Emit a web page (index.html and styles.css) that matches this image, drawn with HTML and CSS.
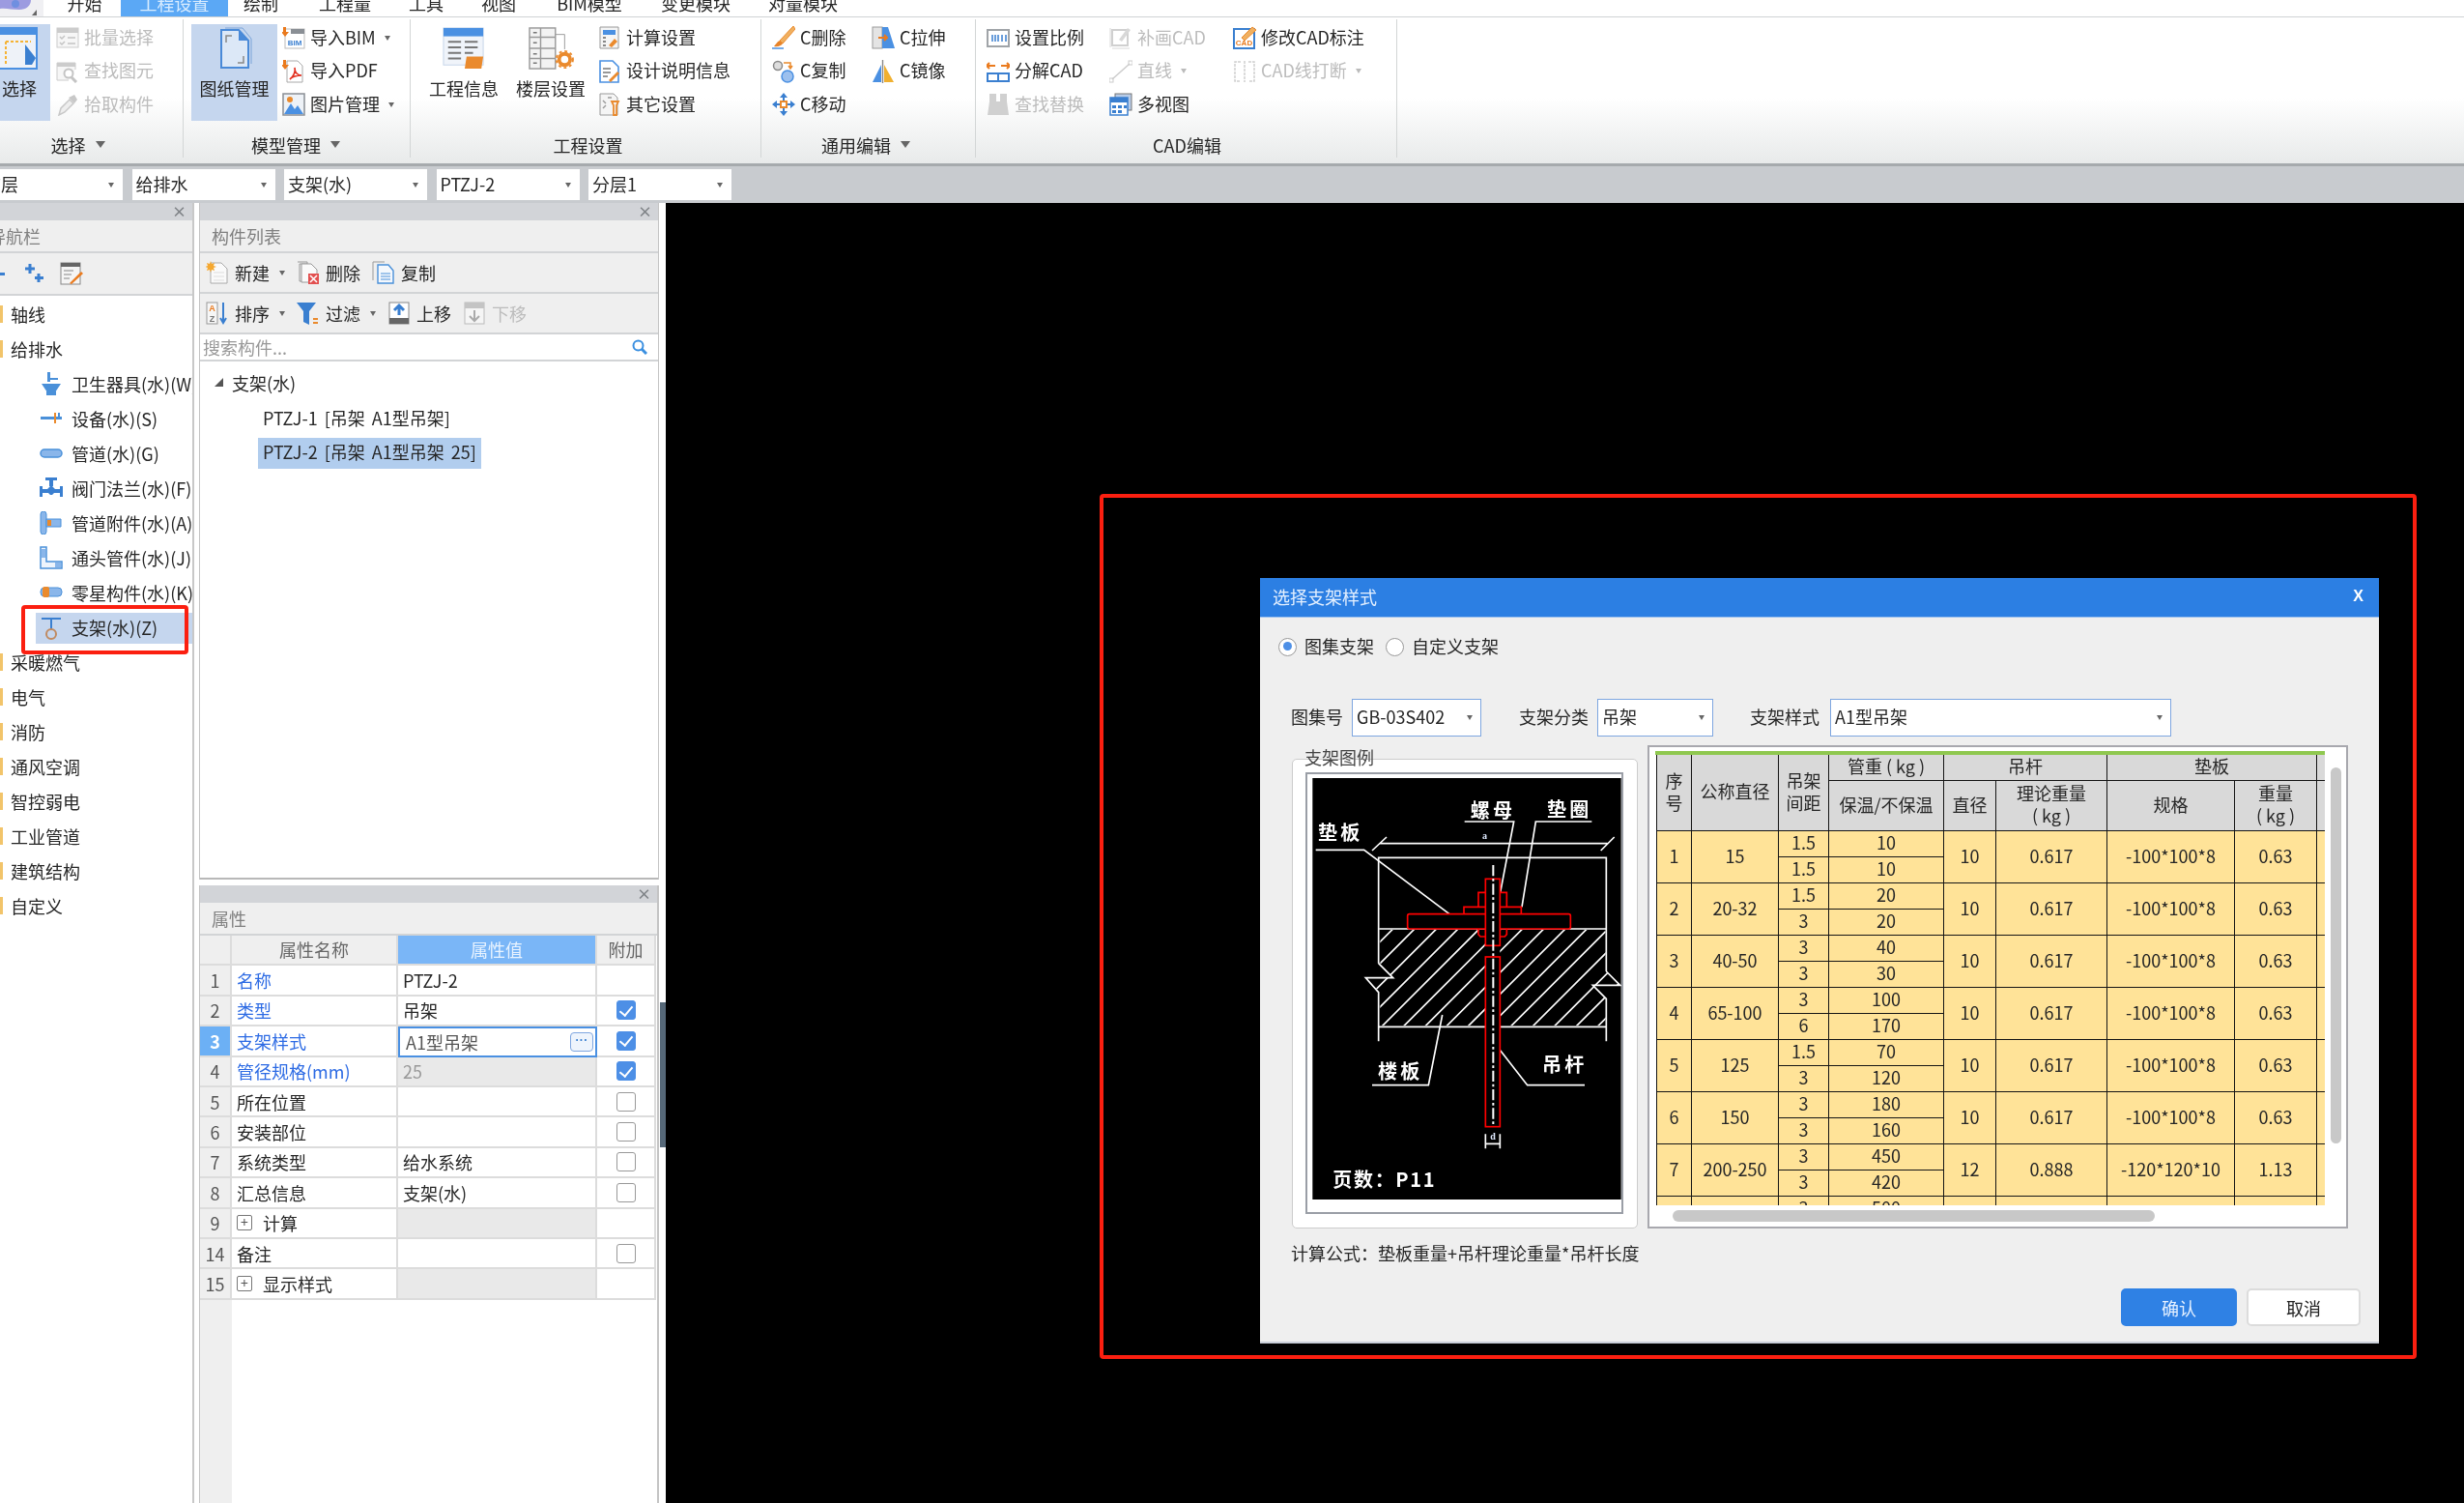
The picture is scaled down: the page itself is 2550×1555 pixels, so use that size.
FILE: index.html
```html
<!DOCTYPE html>
<html lang="zh-CN">
<head>
<meta charset="utf-8">
<title>选择支架样式</title>
<link rel="stylesheet" href="styles.css">
</head>
<body>
<svg class="defs" aria-hidden="true">
  <symbol id="i-batch" viewBox="0 0 24 24"><rect x="1" y="2" width="22" height="20" fill="#f6f6f6" stroke="#ccc"/><rect x="1" y="2" width="22" height="5" fill="#ccc"/><path d="M4 11l2 2 3-3M4 17l2 2 3-3M12 12h8M12 18h8" fill="none" stroke="#c4c4c4" stroke-width="1.5"/></symbol>
  <symbol id="i-find" viewBox="0 0 24 24"><path d="M20 10V3H1v18h12" fill="#f6f6f6" stroke="#ccc"/><rect x="1" y="3" width="19" height="4" fill="#ccc"/><circle cx="13" cy="14" r="4.5" fill="#fff" stroke="#c4c4c4" stroke-width="2"/><path d="M16 18l5 5" stroke="#c4c4c4" stroke-width="3"/></symbol>
  <symbol id="i-pick" viewBox="0 0 24 24"><path d="M3 23l2-7 9-9 4 4-9 9z" fill="#eee" stroke="#c8c8c8" stroke-width="1.5"/><path d="M13 5l6 6 3-4-3-5z" fill="#c8c8c8"/></symbol>
  <symbol id="i-bim" viewBox="0 0 24 24"><rect x="3" y="3" width="20" height="20" fill="#fff" stroke="#bbb"/><rect x="9" y="3" width="14" height="5" fill="#8a8f95"/><text x="13" y="20" class="svg-mini" fill="#3a7fd0">BIM</text><path d="M1 1h3v5h3l-4 5-4-5h2z" fill="#ea7a1d"/></symbol>
  <symbol id="i-pdf" viewBox="0 0 24 24"><path d="M5 1h11l5 5v17H5z" fill="#fff" stroke="#aaa"/><path d="M8 20c4-3 6-8 5-12 0 5 3 8 7 8-5 0-9 1-12 4z" fill="none" stroke="#e23020" stroke-width="1.6"/><path d="M1 0h3v5h3l-4 5-4-5h2z" fill="#ea7a1d"/></symbol>
  <symbol id="i-pic" viewBox="0 0 24 24"><rect x="1" y="1" width="22" height="22" fill="#eef2f7" stroke="#8a8f95" stroke-width="1.5"/><circle cx="8" cy="7" r="3" fill="#ea8a2d"/><path d="M2 22l7-11 4 6 3-4 6 9z" fill="#4a90e2"/></symbol>
  <symbol id="i-calc" viewBox="0 0 24 24"><path d="M2 1h19v22H2z" fill="#f5f5f5" stroke="#999"/><rect x="5" y="4" width="13" height="5" fill="#4a90e2"/><path d="M5 12h3M5 16h3M5 20h3" stroke="#888" stroke-width="2"/><path d="M11 20l6-7 3 3-6 6z" fill="#ea8a2d"/></symbol>
  <symbol id="i-design" viewBox="0 0 24 24"><path d="M2 1h13l6 6v16H2z" fill="#fff" stroke="#4a90e2" stroke-width="1.6"/><path d="M5 9h8M5 13h8M5 17h5" stroke="#777" stroke-width="1.5"/><path d="M11 21l9-9 2 2-9 9z" fill="#ea8a2d"/></symbol>
  <symbol id="i-other" viewBox="0 0 24 24"><path d="M2 1h14l4 4v18H2z" fill="#f5f5f5" stroke="#999"/><path d="M5 8l3 3M5 16l3-3M10 5h4" stroke="#999" stroke-width="1.4"/><path d="M14 9h7l-2 4v10h-3V13z" fill="none" stroke="#ea8a2d" stroke-width="1.8"/></symbol>
  <symbol id="i-select" viewBox="0 0 40 44"><rect x="-6" y="1" width="44" height="42" fill="#eef2f8" stroke="#4a90e2" stroke-width="2"/><rect x="-6" y="1" width="44" height="7" fill="#4a90e2"/><path d="M6 15h26M6 15v24" fill="none" stroke="#f5b335" stroke-width="2" stroke-dasharray="3 2"/><path d="M26 18l11 14-4 7h-7z" fill="#3a7fd0"/></symbol>
  <symbol id="i-paper" viewBox="0 0 36 44"><path d="M8 1h18l9 11v26" fill="none" stroke="#7aa3d8"/><path d="M4 3h18l10 11v28H4z" fill="#dce8f7" stroke="#4a8ad8" stroke-width="2"/><path d="M22 3v11h10z" fill="#4a8ad8"/><path d="M9 16V9h6M27 30v7h-6" fill="none" stroke="#888" stroke-width="1.5"/></symbol>
  <symbol id="i-info" viewBox="0 0 46 46"><rect x="1" y="1" width="43" height="40" fill="#f0f4fa" stroke="#c4d4e8"/><rect x="1" y="1" width="43" height="9" fill="#4a90e2"/><path d="M6 16h14M24 16h14M6 22h14M24 22h14M6 28h14M24 28h9M6 34h14" stroke="#777" stroke-width="2"/><path d="M26 32h18l-2 13H24z" fill="#ea8a2d"/></symbol>
  <symbol id="i-floor" viewBox="0 0 48 46"><rect x="1" y="1" width="28" height="44" fill="#f3f3f3" stroke="#999" stroke-width="1.5"/><path d="M1 11h28M1 23h28M1 34h28M13 1v44" stroke="#999" stroke-width="1.5"/><path d="M5 6h4M5 17h4M5 29h4M5 39h4" stroke="#777" stroke-width="1.5"/><path d="M29 8h10v16" fill="none" stroke="#999"/><circle cx="39" cy="35" r="6" fill="#fff" stroke="#ea8a2d" stroke-width="4"/><circle cx="39" cy="35" r="9" fill="none" stroke="#ea8a2d" stroke-width="2" stroke-dasharray="3 3"/></symbol>
  <symbol id="i-cdel" viewBox="0 0 24 24"><path d="M22 0L8 15l3 3L24 3z" fill="#f0b060" stroke="#ea8a2d"/><path d="M8 15c-3 1-4 4-6 6 4 1 8-1 9-3z" fill="#e8842a"/><path d="M0 23h12" stroke="#4a90e2" stroke-width="1.5"/></symbol>
  <symbol id="i-cstretch" viewBox="0 0 24 24"><rect x="1" y="1" width="10" height="22" fill="#e4e4e4" stroke="#999"/><path d="M11 23V1h6l7 22z" fill="#4a90e2"/><path d="M7 12h9M13 9l3 3-3 3" fill="none" stroke="#ea7a1d" stroke-width="2"/></symbol>
  <symbol id="i-ccopy" viewBox="0 0 24 24"><circle cx="6" cy="6" r="4.5" fill="#ddd" stroke="#888" stroke-width="1.5"/><circle cx="16" cy="17" r="6" fill="#9cc0ee" stroke="#4a90e2" stroke-width="1.5"/><path d="M12 3h7v5M17 6l2 3 2-3" fill="none" stroke="#ea8a2d" stroke-width="1.5"/></symbol>
  <symbol id="i-cmirror" viewBox="0 0 24 24"><path d="M10 5v18H1z" fill="#4a90e2"/><path d="M13 5v18h10z" fill="#f0b030"/><path d="M11.5 0v24" stroke="#888" stroke-width="1.4"/></symbol>
  <symbol id="i-cmove" viewBox="0 0 24 24"><path d="M12 0l4 5H8zM12 24l-4-5h8zM0 12l5-4v8zM24 12l-5 4V8z" fill="#3a7fd0"/><path d="M12 5v3M12 16v3M5 12h3M16 12h3" stroke="#3a7fd0" stroke-width="2"/><rect x="9" y="9" width="6" height="6" fill="#fff" stroke="#ea8a2d" stroke-width="2"/></symbol>
  <symbol id="i-scale" viewBox="0 0 24 24"><rect x="1" y="4" width="22" height="17" fill="#fff" stroke="#a0a4a8" stroke-width="2"/><path d="M6 9v7M12 9v7M9 9v7M16 9v7M20 9v7" stroke="#3a7fd0" stroke-width="1.5"/></symbol>
  <symbol id="i-explode" viewBox="0 0 24 24"><path d="M1 6h8M3 3L0 6l3 3M23 6h-8M21 3l3 3-3 3" fill="none" stroke="#ea7a1d" stroke-width="2"/><rect x="1" y="14" width="22" height="8" fill="#fff" stroke="#3a7fd0" stroke-width="2"/><path d="M12 14v8" stroke="#3a7fd0" stroke-width="2"/></symbol>
  <symbol id="i-replace" viewBox="0 0 24 24"><path d="M3 1h7v8h4V1h7v8l2 14H1L3 9z" fill="#d0d0d0"/></symbol>
  <symbol id="i-patch" viewBox="0 0 24 24"><rect x="3" y="4" width="16" height="16" fill="none" stroke="#d0d0d0" stroke-width="2"/><path d="M1 2v20M3 23h18" stroke="#d8d8d8"/><path d="M10 14l9-12 3 2-9 12z" fill="#d8d8d8"/></symbol>
  <symbol id="i-line" viewBox="0 0 24 24"><rect x="0" y="19" width="4" height="4" fill="none" stroke="#ccc"/><rect x="20" y="1" width="4" height="4" fill="none" stroke="#ccc"/><path d="M3 20L21 4" stroke="#ccc" stroke-width="1.5"/></symbol>
  <symbol id="i-modify" viewBox="0 0 24 24"><rect x="1" y="3" width="21" height="20" fill="#fff" stroke="#3a7fd0" stroke-width="2"/><text x="11.5" y="20" class="svg-mini" fill="#ea7a1d">CAD</text><path d="M9 12l11-11 4 3-12 11z" fill="#f0b060" stroke="#ea8a2d"/></symbol>
  <symbol id="i-break" viewBox="0 0 24 24"><path d="M8 2H2v20h6M16 2h6v20h-6M12 1v22" fill="none" stroke="#d0d0d0" stroke-width="1.5" stroke-dasharray="3 1"/></symbol>
  <symbol id="i-multi" viewBox="0 0 24 24"><rect x="6" y="1" width="17" height="17" fill="#b8cce8" stroke="#777"/><rect x="1" y="5" width="18" height="18" fill="#fff" stroke="#3a7fd0" stroke-width="1.5"/><rect x="1" y="5" width="18" height="5" fill="#3a7fd0"/><path d="M3 13h4v3H3zM9 13h4v3H9zM15 13h3v3h-3zM3 18h4v3H3zM9 18h4v3H9z" fill="#3a7fd0"/></symbol>
  <symbol id="i-san" viewBox="0 0 24 24"><path d="M8 0h3v10H8zM11 6h8v2h-8z" fill="#4a90d9"/><path d="M2 12h20l-6 9h-8z" fill="#4a90d9"/><path d="M7 20h10v4H7z" fill="#4a90d9"/></symbol>
  <symbol id="i-eq" viewBox="0 0 24 24"><path d="M1 10h14v3H1z" fill="#4a90d9"/><path d="M15 6h2v11h-2z" fill="#ea8a2d"/><path d="M17 10h6v3h-6zM19 6h2v5h-2z" fill="#4a90d9"/></symbol>
  <symbol id="i-pipe" viewBox="0 0 24 24"><rect x="1" y="8" width="22" height="8" rx="4" fill="#8ab6ea" stroke="#4a90d9" stroke-width="1.5"/></symbol>
  <symbol id="i-valve" viewBox="0 0 24 24"><path d="M0 10h3v3h5l3-3h2l3 3h5v-3h3v11h-3v-4h-6l-2 2h-2l-2-2H3v4H0zM10 4h4v6h-4zM6 1h12v3H6z" fill="#3a7fd0"/></symbol>
  <symbol id="i-att" viewBox="0 0 24 24"><rect x="1" y="0" width="6" height="24" rx="3" fill="#8ab6ea" stroke="#4a90d9"/><path d="M7 8h15v8H7z" fill="#8ab6ea" stroke="#4a90d9"/><path d="M8 9h4v6H8z" fill="#ea8a2d"/></symbol>
  <symbol id="i-elb" viewBox="0 0 24 24"><path d="M1 1h6v15h16v7H1z" fill="#eef4fc" stroke="#4a90d9" stroke-width="1.5"/><rect x="2" y="3" width="4" height="9" fill="#8ab6ea"/><rect x="16" y="17" width="6" height="5" fill="#8ab6ea"/></symbol>
  <symbol id="i-part" viewBox="0 0 24 24"><rect x="1" y="7" width="22" height="9" rx="4" fill="#8ab6ea" stroke="#4a90d9"/><rect x="3" y="6" width="7" height="11" rx="2" fill="#ea8a2d"/></symbol>
  <symbol id="i-brk" viewBox="0 0 24 24"><path d="M2 1h20v2H13v10h-2V3H2z" fill="#3a7fd0"/><circle cx="12" cy="18" r="5" fill="none" stroke="#c08a60" stroke-width="2"/></symbol>
  <symbol id="i-new" viewBox="0 0 24 24"><path d="M5 2h11l6 6v15H5z" fill="#fafafa" stroke="#aaa"/><path d="M8 12h11M8 16h11M8 20h11" stroke="#ddd"/><path d="M5 0l1 3 3-1-1 3 3 1-3 1 1 3-3-1-1 3-1-3-3 1 1-3-3-1 3-1-1-3 3 1z" fill="#f5a830"/></symbol>
  <symbol id="i-del" viewBox="0 0 24 24"><path d="M1 1h10v2H3v18h2" fill="none" stroke="#999"/><path d="M5 3h10l6 6v13H5z" fill="#fafafa" stroke="#999"/><rect x="12" y="13" width="11" height="11" fill="#e25050"/><path d="M14 15l7 7M21 15l-7 7" stroke="#fff" stroke-width="1.5"/></symbol>
  <symbol id="i-copy" viewBox="0 0 24 24"><path d="M1 20V1h12" fill="none" stroke="#999"/><path d="M6 4h11l5 6v13H6z" fill="#f4f8fd" stroke="#4a90d9" stroke-width="1.4"/><path d="M9 13h10M9 16h10M9 19h10" stroke="#4a90d9"/></symbol>
  <symbol id="i-sort" viewBox="0 0 24 24"><rect x="1" y="1" width="11" height="22" fill="#f6f6f6" stroke="#999"/><text x="6.5" y="10" class="svg-az" fill="#ea7a1d">A</text><text x="6.5" y="21" class="svg-az" fill="#777">Z</text><path d="M18 1v20M15 17l3 5 3-5" fill="none" stroke="#3a7fd0" stroke-width="2"/></symbol>
  <symbol id="i-filter" viewBox="0 0 24 24"><path d="M0 1h20l-7 9v14l-6-3V10z" fill="#3a7fd0"/><path d="M17 18h5M17 22h5" stroke="#ea8a2d" stroke-width="2"/></symbol>
  <symbol id="i-up" viewBox="0 0 24 24"><rect x="2" y="1" width="20" height="22" fill="#fff" stroke="#888"/><rect x="2" y="17" width="20" height="6" fill="#666"/><path d="M12 14V5M7 9l5-5 5 5" fill="none" stroke="#3a7fd0" stroke-width="3"/></symbol>
  <symbol id="i-down" viewBox="0 0 24 24"><rect x="2" y="1" width="20" height="22" fill="#f5f5f5" stroke="#bbb"/><rect x="2" y="1" width="20" height="6" fill="#c4c4c4"/><path d="M12 9v10M7 15l5 5 5-5" fill="none" stroke="#aaa" stroke-width="2"/></symbol>
  <symbol id="i-plus" viewBox="0 0 24 24"><path d="M8 2v10M3 7h10M17 12v9M13 16.500h9" stroke="#3a7fd0" stroke-width="3"/></symbol>
  <symbol id="i-note" viewBox="0 0 24 24"><rect x="1" y="1" width="20" height="22" fill="#f5f5f5" stroke="#888"/><rect x="1" y="1" width="20" height="4" fill="#666"/><path d="M4 9h10M4 13h8M4 17h6" stroke="#aaa" stroke-width="1.4"/><path d="M10 22l12-12 2 2-12 11z" fill="#ea7a1d"/></symbol>
</svg>

<div class="app">
  <nav class="tabs">
    <div class="logo"><svg class="logo-mark" viewBox="0 0 44 17"><path d="M0 0h32c0 6-5 10-12 10-8 0-14-2-20-1z" fill="#9c9be0"/><circle cx="16" cy="4" r="4" fill="#6f8fe0"/><path d="M38 16v-6l-5 6z" fill="#666"/></svg></div>
    <span class="tab t1">开始</span>
    <span class="tab t2 on">工程设置</span>
    <span class="tab t3">绘制</span>
    <span class="tab t4">工程量</span>
    <span class="tab t5">工具</span>
    <span class="tab t6">视图</span>
    <span class="tab t7">BIM模型</span>
    <span class="tab t8">变更模块</span>
    <span class="tab t9">对量模块</span>
  </nav>

  <section class="ribbon">
    <div class="group g1">
      <div class="group-body">
        <div class="big sel"><svg class="big-ic w40"><use href="#i-select"/></svg><span>选择</span></div>
        <div class="col c-gap">
          <div class="item off"><svg class="ic"><use href="#i-batch"/></svg><span>批量选择</span></div>
          <div class="item off"><svg class="ic"><use href="#i-find"/></svg><span>查找图元</span></div>
          <div class="item off"><svg class="ic"><use href="#i-pick"/></svg><span>拾取构件</span></div>
        </div>
      </div>
      <div class="group-label lbl-left">选择<i class="caret big-caret"></i></div>
    </div>
    <div class="group g2">
      <div class="group-body">
        <div class="big active"><svg class="big-ic w36"><use href="#i-paper"/></svg><span>图纸管理</span></div>
        <div class="col c-gap">
          <div class="item"><svg class="ic"><use href="#i-bim"/></svg><span>导入BIM</span><i class="caret"></i></div>
          <div class="item"><svg class="ic"><use href="#i-pdf"/></svg><span>导入PDF</span></div>
          <div class="item"><svg class="ic"><use href="#i-pic"/></svg><span>图片管理</span><i class="caret"></i></div>
        </div>
      </div>
      <div class="group-label">模型管理<i class="caret big-caret"></i></div>
    </div>
    <div class="group g3">
      <div class="group-body">
        <div class="big"><svg class="big-ic w46"><use href="#i-info"/></svg><span>工程信息</span></div>
        <div class="big b-gap"><svg class="big-ic w48"><use href="#i-floor"/></svg><span>楼层设置</span></div>
        <div class="col c-gap">
          <div class="item"><svg class="ic"><use href="#i-calc"/></svg><span>计算设置</span></div>
          <div class="item"><svg class="ic"><use href="#i-design"/></svg><span>设计说明信息</span></div>
          <div class="item"><svg class="ic"><use href="#i-other"/></svg><span>其它设置</span></div>
        </div>
      </div>
      <div class="group-label">工程设置</div>
    </div>
    <div class="group g4">
      <div class="group-body">
        <div class="col w103">
          <div class="item"><svg class="ic"><use href="#i-cdel"/></svg><span>C删除</span></div>
          <div class="item"><svg class="ic"><use href="#i-ccopy"/></svg><span>C复制</span></div>
          <div class="item"><svg class="ic"><use href="#i-cmove"/></svg><span>C移动</span></div>
        </div>
        <div class="col">
          <div class="item"><svg class="ic"><use href="#i-cstretch"/></svg><span>C拉伸</span></div>
          <div class="item"><svg class="ic"><use href="#i-cmirror"/></svg><span>C镜像</span></div>
        </div>
      </div>
      <div class="group-label">通用编辑<i class="caret big-caret"></i></div>
    </div>
    <div class="group g5">
      <div class="group-body">
        <div class="col w127">
          <div class="item"><svg class="ic"><use href="#i-scale"/></svg><span>设置比例</span></div>
          <div class="item"><svg class="ic"><use href="#i-explode"/></svg><span>分解CAD</span></div>
          <div class="item off"><svg class="ic"><use href="#i-replace"/></svg><span>查找替换</span></div>
        </div>
        <div class="col w128">
          <div class="item off"><svg class="ic"><use href="#i-patch"/></svg><span>补画CAD</span></div>
          <div class="item off"><svg class="ic"><use href="#i-line"/></svg><span>直线</span><i class="caret"></i></div>
          <div class="item"><svg class="ic"><use href="#i-multi"/></svg><span>多视图</span></div>
        </div>
        <div class="col">
          <div class="item"><svg class="ic"><use href="#i-modify"/></svg><span>修改CAD标注</span></div>
          <div class="item off"><svg class="ic"><use href="#i-break"/></svg><span>CAD线打断</span><i class="caret"></i></div>
        </div>
      </div>
      <div class="group-label">CAD编辑</div>
    </div>
  </section>

  <section class="selbar">
    <div class="pick first"><span>首层</span><i class="caret"></i></div>
    <div class="pick"><span>给排水</span><i class="caret"></i></div>
    <div class="pick"><span>支架(水)</span><i class="caret"></i></div>
    <div class="pick"><span>PTZJ-2</span><i class="caret"></i></div>
    <div class="pick"><span>分层1</span><i class="caret"></i></div>
  </section>

  <main class="workspace">
    <aside class="nav">
      <div class="panel-head"><span class="close">×</span></div>
      <div class="panel-title nav-title">导航栏</div>
      <div class="tool-row nav-tools">
        <i class="minus"></i>
        <svg class="ic"><use href="#i-plus"/></svg>
        <svg class="ic"><use href="#i-note"/></svg>
      </div>
      <ul class="tree">
        <li class="node"><i class="fold"></i>轴线</li>
        <li class="node"><i class="fold"></i>给排水</li>
        <li class="leaf"><svg class="ic"><use href="#i-san"/></svg>卫生器具(水)(W)</li>
        <li class="leaf"><svg class="ic"><use href="#i-eq"/></svg>设备(水)(S)</li>
        <li class="leaf"><svg class="ic"><use href="#i-pipe"/></svg>管道(水)(G)</li>
        <li class="leaf"><svg class="ic"><use href="#i-valve"/></svg>阀门法兰(水)(F)</li>
        <li class="leaf"><svg class="ic"><use href="#i-att"/></svg>管道附件(水)(A)</li>
        <li class="leaf"><svg class="ic"><use href="#i-elb"/></svg>通头管件(水)(J)</li>
        <li class="leaf"><svg class="ic"><use href="#i-part"/></svg>零星构件(水)(K)</li>
        <li class="leaf chosen"><svg class="ic"><use href="#i-brk"/></svg>支架(水)(Z)</li>
        <li class="node"><i class="fold"></i>采暖燃气</li>
        <li class="node"><i class="fold"></i>电气</li>
        <li class="node"><i class="fold"></i>消防</li>
        <li class="node"><i class="fold"></i>通风空调</li>
        <li class="node"><i class="fold"></i>智控弱电</li>
        <li class="node"><i class="fold"></i>工业管道</li>
        <li class="node"><i class="fold"></i>建筑结构</li>
        <li class="node"><i class="fold"></i>自定义</li>
      </ul>
      <div class="mark nav-mark"></div>
    </aside>

    <div class="mid">
      <section class="list-panel">
        <div class="panel-head"><span class="close">×</span></div>
        <div class="panel-title">构件列表</div>
        <div class="tool-row">
          <div class="tool"><svg class="ic"><use href="#i-new"/></svg><span>新建</span><i class="caret"></i></div>
          <div class="tool"><svg class="ic"><use href="#i-del"/></svg><span>删除</span></div>
          <div class="tool"><svg class="ic"><use href="#i-copy"/></svg><span>复制</span></div>
        </div>
        <div class="tool-row">
          <div class="tool"><svg class="ic"><use href="#i-sort"/></svg><span>排序</span><i class="caret"></i></div>
          <div class="tool"><svg class="ic"><use href="#i-filter"/></svg><span>过滤</span><i class="caret"></i></div>
          <div class="tool"><svg class="ic"><use href="#i-up"/></svg><span>上移</span></div>
          <div class="tool off"><svg class="ic"><use href="#i-down"/></svg><span>下移</span></div>
        </div>
        <div class="search"><span>搜索构件...</span><svg class="search-ic" viewBox="0 0 16 16"><circle cx="6.500" cy="6.500" r="5" fill="none" stroke="#3a8fe0" stroke-width="2"/><path d="M10 10l5 5" stroke="#3a8fe0" stroke-width="3"/></svg></div>
        <div class="list">
          <div class="list-root"><i class="tri"></i>支架(水)</div>
          <div class="list-item">PTZJ-1 [吊架 A1型吊架]</div>
          <div class="list-item picked"><span>PTZJ-2 [吊架 A1型吊架 25]</span></div>
        </div>
      </section>

      <section class="props">
        <div class="panel-head"><span class="close">×</span></div>
        <div class="panel-title">属性</div>
        <div class="p-row p-head"><div></div><div>属性名称</div><div class="cur">属性值</div><div>附加</div></div>
        <div class="p-row"><div class="n">1</div><div class="blue">名称</div><div>PTZJ-2</div><div></div></div>
        <div class="p-row"><div class="n">2</div><div class="blue">类型</div><div>吊架</div><div class="chk"><i class="box on"></i></div></div>
        <div class="p-row"><div class="n cur">3</div><div class="blue">支架样式</div><div class="edit"><span>A1型吊架</span><i class="dots">...</i></div><div class="chk"><i class="box on"></i></div></div>
        <div class="p-row"><div class="n">4</div><div class="blue">管径规格(mm)</div><div class="ro">25</div><div class="chk"><i class="box on"></i></div></div>
        <div class="p-row"><div class="n">5</div><div>所在位置</div><div></div><div class="chk"><i class="box"></i></div></div>
        <div class="p-row"><div class="n">6</div><div>安装部位</div><div></div><div class="chk"><i class="box"></i></div></div>
        <div class="p-row"><div class="n">7</div><div>系统类型</div><div>给水系统</div><div class="chk"><i class="box"></i></div></div>
        <div class="p-row"><div class="n">8</div><div>汇总信息</div><div>支架(水)</div><div class="chk"><i class="box"></i></div></div>
        <div class="p-row"><div class="n">9</div><div><i class="plus">+</i>计算</div><div class="ro"></div><div></div></div>
        <div class="p-row"><div class="n">14</div><div>备注</div><div></div><div class="chk"><i class="box"></i></div></div>
        <div class="p-row"><div class="n">15</div><div><i class="plus">+</i>显示样式</div><div class="ro"></div><div></div></div>
        <div class="p-fill"><div></div></div>
      </section>
      <div class="scroll-dark"></div>
    </div>

    <div class="canvas">
      <div class="mark canvas-mark"></div>
      <div class="dialog">
        <header class="d-title"><span>选择支架样式</span><span class="d-x">X</span></header>
        <div class="d-body">
          <div class="radios">
            <i class="radio on"></i><span>图集支架</span>
            <i class="radio"></i><span>自定义支架</span>
          </div>
          <div class="form">
            <label>图集号</label><div class="dsel s1"><span>GB-03S402</span><i class="caret"></i></div>
            <label class="l2">支架分类</label><div class="dsel s2"><span>吊架</span><i class="caret"></i></div>
            <label class="l3">支架样式</label><div class="dsel s3"><span>A1型吊架</span><i class="caret"></i></div>
          </div>
          <div class="content">
            <div class="fieldset">
              <div class="legend">支架图例</div>
              <div class="frame">
                <svg class="drawing" viewBox="85 105 958 1308">
                  <defs><clipPath id="slab"><path d="M295 576H995V705L1040 748H955L995 790V874H295V770L250 725H335L295 680Z"/></clipPath></defs>
                  <rect x="85" y="105" width="958" height="1308" fill="#000"/>
                  <g fill="none" stroke="#fff" stroke-width="5">
                    <path clip-path="url(#slab)" d="M335 573L31 877M402 573L98 877M470 573L166 877M537 573L233 877M603 573L299 877M670 573L366 877M737 573L433 877M803 573L499 877M870 573L566 877M937 573L633 877M995 581L699 877M1063 581L767 877M1130 581L834 877M1198 581L902 877M1265 581L969 877"/>
                    <path d="M557 240H710L668 460M952 240H778L735 505M95 328H245L510 527M295 308H1000M270 330L315 288M980 330L1022 288"/>
                    <path d="M290 680V352H997V705M293 573H997M290 877H997M290 680L335 725H250L290 770V922M997 705L1040 748H955L997 790V922"/>
                    <path d="M270 1058H445L488 840M668 950L752 1058H930M622 1210V1255M667 1210V1255M622 1240H667"/>
                  </g>
                  <rect x="622" y="600" width="45" height="590" fill="#000"/>
                  <g fill="#000" stroke="#f00" stroke-width="5">
                    <rect x="380" y="527" width="506" height="46" rx="6"/>
                    <path d="M555 527V505H733V527M600 505V460H688V505" fill="none"/>
                    <path d="M600 573V590L606 597H682L688 590V573" fill="none"/>
                    <rect x="622" y="418" width="45" height="207"/>
                    <rect x="622" y="660" width="45" height="527"/>
                  </g>
                  <path d="M646 375V1180" stroke="#fff" stroke-width="6" stroke-dasharray="34 8 8 8" fill="none"/>
                  <g class="cad">
                    <text x="575" y="228">螺母</text>
                    <text x="813" y="226">垫圈</text>
                    <text x="102" y="298">垫板</text>
                    <text x="288" y="1038">楼板</text>
                    <text x="798" y="1018">吊杆</text>
                    <text x="148" y="1374" class="cad-page">页数：P11</text>
                    <text x="612" y="293" class="cad-sm">a</text>
                    <text x="637" y="1228" class="cad-sm">d</text>
                  </g>
                </svg>
              </div>
            </div>
            <div class="tbl-panel">
              <div class="tbl-clip">
                <table class="spec">
                  <colgroup><col class="c1"><col class="c2"><col class="c3"><col class="c4"><col class="c5"><col class="c6"><col class="c7"><col class="c8"><col class="c9"></colgroup>
                  <thead>
                    <tr class="h1"><th rowspan="2">序<br>号</th><th rowspan="2">公称直径</th><th rowspan="2">吊架<br>间距</th><th>管重 ( kg )</th><th colspan="2">吊杆</th><th colspan="2">垫板</th><th></th></tr>
                    <tr class="h2"><th>保温/不保温</th><th>直径</th><th>理论重量<br>( kg )</th><th>规格</th><th>重量<br>( kg )</th><th></th></tr>
                  </thead>
                  <tbody>
                    <tr><td rowspan="2">1</td><td rowspan="2">15</td><td>1.5</td><td>10</td><td rowspan="2">10</td><td rowspan="2">0.617</td><td rowspan="2">-100*100*8</td><td rowspan="2">0.63</td><td rowspan="2"></td></tr>
                    <tr><td>1.5</td><td>10</td></tr>
                    <tr><td rowspan="2">2</td><td rowspan="2">20-32</td><td>1.5</td><td>20</td><td rowspan="2">10</td><td rowspan="2">0.617</td><td rowspan="2">-100*100*8</td><td rowspan="2">0.63</td><td rowspan="2"></td></tr>
                    <tr><td>3</td><td>20</td></tr>
                    <tr><td rowspan="2">3</td><td rowspan="2">40-50</td><td>3</td><td>40</td><td rowspan="2">10</td><td rowspan="2">0.617</td><td rowspan="2">-100*100*8</td><td rowspan="2">0.63</td><td rowspan="2"></td></tr>
                    <tr><td>3</td><td>30</td></tr>
                    <tr><td rowspan="2">4</td><td rowspan="2">65-100</td><td>3</td><td>100</td><td rowspan="2">10</td><td rowspan="2">0.617</td><td rowspan="2">-100*100*8</td><td rowspan="2">0.63</td><td rowspan="2"></td></tr>
                    <tr><td>6</td><td>170</td></tr>
                    <tr><td rowspan="2">5</td><td rowspan="2">125</td><td>1.5</td><td>70</td><td rowspan="2">10</td><td rowspan="2">0.617</td><td rowspan="2">-100*100*8</td><td rowspan="2">0.63</td><td rowspan="2"></td></tr>
                    <tr><td>3</td><td>120</td></tr>
                    <tr><td rowspan="2">6</td><td rowspan="2">150</td><td>3</td><td>180</td><td rowspan="2">10</td><td rowspan="2">0.617</td><td rowspan="2">-100*100*8</td><td rowspan="2">0.63</td><td rowspan="2"></td></tr>
                    <tr><td>3</td><td>160</td></tr>
                    <tr><td rowspan="2">7</td><td rowspan="2">200-250</td><td>3</td><td>450</td><td rowspan="2">12</td><td rowspan="2">0.888</td><td rowspan="2">-120*120*10</td><td rowspan="2">1.13</td><td rowspan="2"></td></tr>
                    <tr><td>3</td><td>420</td></tr>
                    <tr><td></td><td></td><td>3</td><td>500</td><td></td><td></td><td></td><td></td><td></td></tr>
                  </tbody>
                </table>
              </div>
              <div class="thumb-v"></div>
              <div class="thumb-h"></div>
            </div>
          </div>
          <p class="formula">计算公式：垫板重量+吊杆理论重量*吊杆长度</p>
          <div class="btns"><button class="btn primary">确认</button><button class="btn">取消</button></div>
        </div>
      </div>
    </div>
  </main>
</div>
</body>
</html>
```

FILE: styles.css
```css
* { box-sizing: border-box; }
html, body { margin: 0; padding: 0; background: #000; }
body { width: 2550px; height: 1555px; overflow: hidden; font: 18px/24px "Noto Sans CJK SC", "Noto Sans", sans-serif; color: #262626; }
.defs { position: absolute; width: 0; height: 0; }
i { font-style: normal; display: block; flex: none; }
ul { list-style: none; margin: 0; padding: 0; }
.app { width: 2550px; height: 1555px; display: flex; flex-direction: column; overflow: hidden; filter: blur(.45px); }
.svg-mini { font: 700 8px "Liberation Sans", sans-serif; text-anchor: middle; }
.svg-az { font: 700 9px "Liberation Sans", sans-serif; text-anchor: middle; }

/* tab strip */
.tabs { height: 18px; flex: none; display: flex; background: #fff; border-bottom: 1px solid #d0d2d4; overflow: hidden; }
.logo { width: 45px; background: #f0f0f3; }
.logo-mark { display: block; width: 44px; height: 17px; }
.tab { height: 17px; line-height: 7px; text-align: center; flex: none; }
.t1 { width: 80px; padding-left: 5px; } .t2 { width: 111px; } .t3 { width: 68px; } .t4 { width: 106px; } .t5 { width: 62px; }
.t6 { width: 88px; } .t7 { width: 100px; } .t8 { width: 120px; } .t9 { width: 102px; }
.tab.on { background: #5ba8f5; color: #d8ecff; }

/* ribbon */
.ribbon { height: 154px; flex: none; display: flex; padding-top: 2px; background: linear-gradient(#fff 55%, #e8eaea); border-bottom: 3px solid #a6aaad; }
.group { height: 143px; display: flex; flex-direction: column; border-right: 1px solid #d3d6d6; flex: none; }
.g1 { width: 190px; } .g2 { width: 235px; padding-left: 8px; } .g3 { width: 363px; padding-left: 11px; } .g4 { width: 222px; padding-left: 11px; } .g5 { width: 436px; padding-left: 11px; }
.group-body { height: 110px; padding-top: 2px; display: flex; }
.group-label { height: 33px; padding-top: 6px; display: flex; align-items: center; justify-content: center; gap: 10px; line-height: 26px; }
.lbl-left { padding-right: 28px; }
.g2 .group-label { padding-right: 10px; }
.g3 .group-label { padding-right: 6px; }
.g4 .group-label { padding-right: 16px; }
.g5 .group-label { padding-right: 9px; }
.big { width: 88px; height: 100px; margin-top: 3px; padding-top: 3px; display: flex; flex-direction: column; align-items: center; }
.big span { margin-top: 6.5px; line-height: 24px; }
.big.sel { width: 52px; padding-right: 12px; background: #c5d6ee; }
.big.active { width: 89px; background: #c5d6ee; }
.b-gap { margin-left: 2px; }
.big-ic { height: 44px; display: block; }
.big-ic.w40 { width: 40px; }
.big-ic.w36 { width: 36px; }
.big-ic.w46 { width: 46px; }
.big-ic.w48 { width: 48px; }
.col { display: flex; flex-direction: column; }
.c-gap { margin-left: 6px; }
.g2 .c-gap, .g3 .c-gap { margin-left: 5px; }
.w103 { width: 103px; } .w127 { width: 127px; } .w128 { width: 128px; }
.item { height: 34.5px; display: flex; align-items: center; gap: 5px; white-space: nowrap; }
.item span { margin-bottom: 3px; }
.item.off, .tool.off { color: #bcbcbc; }
.ic { width: 24px; height: 24px; flex: none; display: block; }
.caret { width: 0; height: 0; border-left: 3.5px solid transparent; border-right: 3.5px solid transparent; border-top: 5px solid #666; }
.big-caret { border-left-width: 5px; border-right-width: 5px; border-top-width: 7px; }
.item .caret { margin-left: 4px; }
.item.off .caret { border-top-color: #bbb; }

/* selector bar */
.selbar { height: 38px; flex: none; display: flex; gap: 9.5px; padding-top: 3px; background: #c8cbcf; }
.pick { width: 148px; height: 32px; background: #fff; display: flex; align-items: center; justify-content: space-between; padding: 0 9px 0 4px; }
.pick span { margin-bottom: 3px; }
.pick.first { margin-left: -21px; }

/* workspace */
.workspace { flex: 1; min-height: 0; display: flex; background: #fff; }
.nav { width: 201px; flex: none; position: relative; overflow: hidden; background: #fff; border-right: 2px solid #c8c8c8; }
.panel-head { height: 18px; background: #d2d4d8; display: flex; justify-content: flex-end; align-items: center; padding-right: 6px; }
.close { color: #808488; font-weight: 700; line-height: 18px; font-size: 15px; }
.panel-title { height: 34px; background: #efefef; border-bottom: 2px solid #d2d4d6; color: #808080; padding-left: 12px; line-height: 32px; }
.nav-title { padding-left: 0; margin-left: -12px; }
.tool-row { height: 42px; background: #efefef; border-bottom: 2px solid #d2d4d6; display: flex; align-items: center; padding-left: 6px; }
.nav-tools { padding-left: 0; height: 44px; }
.minus { width: 5px; height: 3px; background: #3a7fd0; margin-right: 18px; }
.nav-tools .ic + .ic { margin-left: 15px; }
.tree { padding-top: .5px; }
.node, .leaf { height: 36px; display: flex; align-items: center; white-space: nowrap; }
.fold { width: 3px; height: 18px; background: #f2c46a; margin-right: 8px; }
.leaf { padding-left: 41px; gap: 9px; }
.leaf.chosen { height: 32px; margin: 3.5px 0 .5px 37px; padding: 0 0 3px 4px; background: #c5d6ee; }
.leaf.chosen .ic { margin-bottom: -3px; }
.mark { position: absolute; border: 4.5px solid #fb1f10; border-radius: 4px; pointer-events: none; }
.nav-mark { left: 22px; top: 416px; width: 173px; height: 51px; }

.mid { width: 488px; flex: none; padding: 0 7px 0 5px; background: #fff; display: flex; flex-direction: column; position: relative; }
.list-panel { height: 700px; flex: none; display: flex; flex-direction: column; border-left: 1px solid #c4c4c4; border-right: 1px solid #c4c4c4; }
.tool { display: flex; align-items: center; gap: 6px; }
.tool + .tool { margin-left: 12px; }
.tool .caret { margin-left: 4px; }
.search { height: 28px; flex: none; border-bottom: 2px solid #d2d4d6; display: flex; align-items: center; justify-content: space-between; padding: 0 11px 0 3px; color: #999; }
.search-ic { width: 16px; height: 16px; }
.list { flex: 1; padding-top: 3.5px; border-bottom: 2px solid #b8b8b8; }
.list-root { height: 36px; display: flex; align-items: center; padding-left: 15px; gap: 9px; }
.tri { width: 0; height: 0; border-left: 9px solid transparent; border-bottom: 9px solid #555; }
.list-item { height: 36px; padding-left: 65px; line-height: 36px; word-spacing: 3px; }
.list-item.picked { padding-left: 60px; }
.list-item.picked span { display: inline-block; width: 231px; height: 32px; margin-top: 3.5px; line-height: 29px; padding-left: 5px; background: #b1cdee; vertical-align: top; white-space: nowrap; }

.props { flex: 1; margin-top: 6px; min-height: 0; display: flex; flex-direction: column; border-left: 1px solid #c4c4c4; border-right: 2px solid #c4c4c4; }
.p-row { height: 31.4px; flex: none; display: grid; grid-template-columns: 33px 172px 206px 61px; }
.p-row > div { border-right: 2px solid #dcdcdc; border-bottom: 2px solid #dcdcdc; padding: 0 0 0 5px; display: flex; align-items: center; color: #262626; white-space: nowrap; line-height: 24px; }
.p-row > .n { background: #efefef; justify-content: center; padding: 0; color: #555; }
.p-row > .n.cur { background: #6cb0f5; color: #fff; font-weight: 700; }
.p-head > div { background: #efefef; justify-content: center; padding: 0 0 2px; color: #666; }
.p-head > .cur { background: #7ab6f7; color: #e8f3ff; }
.p-row > .blue { color: #2d6be4; }
.p-row > .ro { background: #e9e9e9; color: #999; }
.p-row > .edit { border: 2px solid #4a90e2; justify-content: space-between; padding: 0 2px 0 6px; color: #555; }
.p-row > .chk { justify-content: center; padding: 0; }
.dots { width: 24px; height: 20px; border: 1.5px solid #7ea6e0; border-radius: 4px; background: #eef4fc; color: #3a7fd0; font: 700 12px/9px "Liberation Sans", sans-serif; text-align: center; letter-spacing: 1px; }
.box { width: 20px; height: 20px; border: 1.5px solid #999; border-radius: 3px; background: #fff; position: relative; }
.box.on { background: #4d8fe6; border-color: #4d8fe6; }
.box.on::after { content: ""; position: absolute; left: 5px; top: 1.5px; width: 6px; height: 11px; border: solid #fff; border-width: 0 2.5px 2.5px 0; transform: rotate(40deg); }
.plus { width: 16px; height: 16px; border: 1.5px solid #777; border-radius: 2px; font-size: 14px; line-height: 13px; text-align: center; margin-right: 11px; color: #555; }
.p-fill { flex: 1; }
.p-fill > div { width: 33px; height: 100%; background: #efefef; }
.scroll-dark { position: absolute; right: 0; top: 827px; width: 6px; height: 150px; background: #566878; }

/* canvas + dialog */
.canvas { flex: 1; position: relative; background: #000; }
.canvas-mark { left: 449px; top: 301px; width: 1363px; height: 895px; }
.dialog { position: absolute; left: 615px; top: 388px; width: 1158px; height: 792px; background: #efefef; border-bottom: 2px solid #c9ced8; display: flex; flex-direction: column; }
.d-title { height: 41px; flex: none; background: #2c7fe3; border-bottom: 1px solid #9cc0ee; color: #e4f0ff; display: flex; justify-content: space-between; align-items: center; padding: 0 16px 2px 13px; }
.d-x { font: 700 16px "Liberation Sans", sans-serif; color: #fff; }
.d-body { padding: 0 19px; display: flex; flex-direction: column; }
.radios { height: 28px; margin-top: 16px; display: flex; align-items: center; }
.radio { width: 19px; height: 19px; border: 1.5px solid #999; border-radius: 50%; background: #fff; margin-right: 8px; position: relative; }
.radio.on::after { content: ""; position: absolute; left: 3.5px; top: 3.5px; width: 9px; height: 9px; border-radius: 50%; background: #4d8fe6; }
.radios span { margin: 0 12px 3px 0; }
.form { height: 39px; margin: 40px 0 0 13px; display: flex; align-items: center; }
.form label { width: 63px; margin-bottom: 3px; }
.form .l2 { width: 81px; margin-left: 39px; }
.form .l3 { width: 83px; margin-left: 38px; }
.dsel { height: 39px; background: #fff; border: 1.5px solid #7ea6e0; display: flex; align-items: center; justify-content: space-between; padding: 0 8px 0 4px; }
.dsel span { margin-bottom: 3px; }
.s1 { width: 134px; } .s2 { width: 120px; } .s3 { width: 353px; }
.content { display: flex; margin: 9px 0 0 14px; height: 500px; }
.fieldset { width: 358px; height: 486px; margin-top: 14px; background: #fff; border: 1px solid #ccc; border-radius: 5px; }
.legend { height: 24px; margin: -15px 0 0 12px; color: #444; }
.frame { width: 329px; height: 457px; margin: 4px 0 0 13px; background: #fff; border: 2px solid #9a9ea6; padding: 4px 0 0 5px; }
.drawing { display: block; width: 320px; height: 436px; }
.cad { font: 700 60px "Noto Sans CJK SC", sans-serif; fill: #fff; letter-spacing: 10px; }
.cad .cad-page { letter-spacing: 5px; }
.cad .cad-sm { font: 700 30px "Liberation Serif", serif; letter-spacing: 0; fill: #dfeaff; }
.tbl-panel { width: 725px; height: 500px; margin-left: 10px; background: #fff; border: 2px solid #a8a8ae; padding: 4px 0 0 6px; position: relative; }
.tbl-clip { width: 693px; height: 470px; border-top: 4px solid #8fc84f; overflow: hidden; }
.spec { border-collapse: collapse; table-layout: fixed; width: 723px; margin-left: 1px; background: #ffe398; font-size: 18px; line-height: 23px; }
.spec col.c1 { width: 36px; } .spec col.c2 { width: 90px; } .spec col.c3 { width: 52px; } .spec col.c4 { width: 119px; } .spec col.c5 { width: 54px; } .spec col.c6 { width: 115px; } .spec col.c7 { width: 132px; } .spec col.c8 { width: 85px; } .spec col.c9 { width: 40px; }
.spec th, .spec td { border: 1px solid #151515; padding: 0 0 3px; text-align: center; font-weight: 400; white-space: nowrap; overflow: hidden; }
.spec th { background: #d9d9d9; }
.spec .h1 { height: 26px; } .spec .h2 { height: 52px; }
.spec tbody tr { height: 27px; }
.spec thead tr:first-child th { border-top: 0; }
.thumb-v { position: absolute; left: 705px; top: 21px; width: 11px; height: 389px; border-radius: 6px; background: #c8c8c8; }
.thumb-h { position: absolute; left: 24px; top: 479px; width: 499px; height: 12px; border-radius: 6px; background: #c8c8c8; }
.formula { height: 24px; margin: 12.5px 0 0 13px; white-space: nowrap; }
.btns { margin-top: 25.5px; display: flex; justify-content: flex-end; gap: 10px; }
.btn { width: 118px; height: 39px; padding: 0; font: inherit; color: #262626; background: #fff; border: 2px solid #dcdcdc; border-radius: 5px; }
.btn.primary { width: 120px; background: #2f81e4; border-color: #2f81e4; color: #e4f0ff; }
```
